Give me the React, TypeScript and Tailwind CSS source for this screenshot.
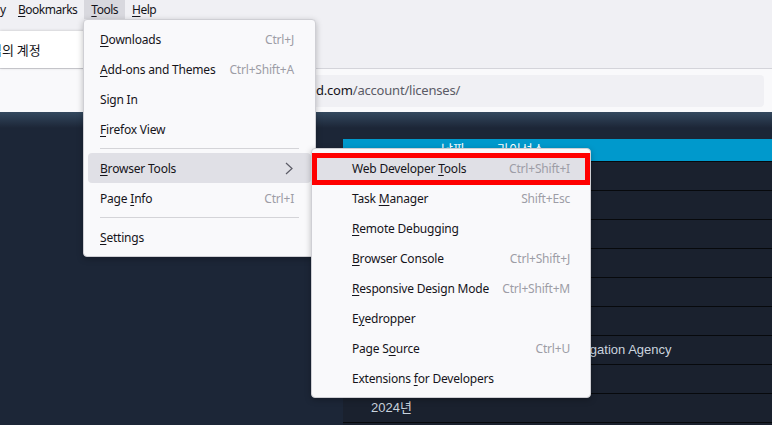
import { FC } from "react";

type Item =
  | { sep: true }
  | {
      sep?: false;
      label: string;
      k: number;
      sc?: string;
      sub?: boolean;
      active?: boolean;
    };

const toolsMenu: Item[] = [
  { label: "Downloads", k: 0, sc: "Ctrl+J" },
  { label: "Add-ons and Themes", k: 0, sc: "Ctrl+Shift+A" },
  { label: "Sign In", k: -1 },
  { label: "Firefox View", k: 0 },
  { sep: true },
  { label: "Browser Tools", k: 0, sub: true, active: true },
  { label: "Page Info", k: 5, sc: "Ctrl+I" },
  { sep: true },
  { label: "Settings", k: 0 },
];

const browserTools: Item[] = [
  { label: "Web Developer Tools", k: 14, sc: "Ctrl+Shift+I", active: true },
  { label: "Task Manager", k: 5, sc: "Shift+Esc" },
  { label: "Remote Debugging", k: 0 },
  { label: "Browser Console", k: 0, sc: "Ctrl+Shift+J" },
  { label: "Responsive Design Mode", k: 0, sc: "Ctrl+Shift+M" },
  { label: "Eyedropper", k: 1 },
  { label: "Page Source", k: 6, sc: "Ctrl+U" },
  { label: "Extensions for Developers", k: 11 },
];

// 밑줄 단축키 표시
const Label: FC<{ text: string; k: number }> = ({ text, k }) => {
  if (k < 0) return <span>{text}</span>;
  return (
    <span>
      {text.slice(0, k)}
      <span className="underline underline-offset-[2px] decoration-1">{text[k]}</span>
      {text.slice(k + 1)}
    </span>
  );
};

const MenuPanel: FC<{ items: Item[]; textPad: string; scPad: string }> = ({ items, textPad, scPad }) => (
  <div className="flex flex-col py-[4px] bg-[#f9f9fb] border border-[#cfcfd4] rounded-[4px] shadow-[0_2px_6px_rgba(0,0,0,0.25)] whitespace-nowrap tracking-[-0.2px]">
    {items.map((it, i) =>
      it.sep ? (
        <div key={i} className="mx-[16px] my-[4px] h-px bg-[#d4d4d8]" />
      ) : (
        <div
          key={i}
          className={`mx-[4px] h-[30px] pt-[1px] flex items-center rounded-[4px] ${textPad} ${scPad} ${
            it.active ? "bg-[#e0e0e6]" : ""
          }`}
        >
          <span className="flex-1 text-[#15141a]">
            <Label text={it.label} k={it.k} />
          </span>
          {it.sc && <span className="text-[#9d9da6] ml-[10px]">{it.sc}</span>}
          {it.sub && (
            <svg width="8" height="13" viewBox="0 0 8 13" className="mr-[1px]">
              <path d="M1 1 L7 6.5 L1 12" fill="none" stroke="#5b5b66" strokeWidth="1.2" />
            </svg>
          )}
        </div>
      )
    )}
  </div>
);

const rows = ["2016년", "2017년", "2018년", "2019년", "2020년", "2021년", "2022년", "2023년", "2024년", ""];

export default function App() {
  return (
    <div className="relative w-[772px] h-[425px] overflow-hidden font-['Noto_Sans','Noto_Sans_CJK_KR',sans-serif] text-[12px]">
      {/* 탭 영역 + 메뉴바 */}
      <div className="h-[68px] bg-[#f0f0f4] flex flex-col">
        <div className="h-[19px] flex items-stretch text-[#15141a] tracking-[-0.5px] whitespace-nowrap">
          <span className="w-[11px] flex items-center">y</span>
          <span className="px-[7px] flex items-center">
            <Label text="Bookmarks" k={0} />
          </span>
          <span className="px-[7px] flex items-center bg-[#d8d8de]">
            <Label text="Tools" k={0} />
          </span>
          <span className="px-[7px] flex items-center">
            <Label text="Help" k={0} />
          </span>
        </div>
        <div className="flex-1 flex items-end">
          <div className="w-[230px] h-[37px] bg-white shadow-[0_0_3px_rgba(0,0,0,0.2)] flex items-center overflow-hidden">
            <span className="ml-[-10px] text-[13px] text-[#15141a] whitespace-nowrap font-['Noto_Sans_CJK_KR',sans-serif]">
              님의 계정
            </span>
          </div>
        </div>
      </div>

      {/* 주소 표시줄 */}
      <div className="h-[44px] bg-[#f9f9fb] border-t border-[#d4d4da] flex items-center pl-[200px] pr-[8px]">
        <div className="flex-1 h-[32px] bg-[#f0f0f4] rounded-[4px] flex items-center pl-[116px] text-[13px] tracking-[-0.2px]">
          <span className="text-[#15141a]">d.com</span>
          <span className="text-[#5b5b66]">/account/licenses/</span>
        </div>
      </div>

      {/* 페이지 */}
      <div className="h-[313px] bg-[#1c2637] flex flex-col font-['Liberation_Sans','Noto_Sans_CJK_KR',sans-serif] text-[13px]">
        <div className="h-[16px] shrink-0 bg-gradient-to-b from-[#34495f] to-[#1c2637]" />
        <div className="ml-[343px] mt-[11px] flex flex-col whitespace-nowrap">
          <div className="h-[22px] bg-[#0099cc] flex items-center text-white">
            <span className="ml-[98px]">날짜</span>
            <span className="ml-[32px]">라이선스</span>
          </div>
          {rows.map((r, i) => (
            <div key={i} className="h-[29px] shrink-0 bg-[#1a212e] border-t border-[#07090c] flex items-center text-[#c9d3de]">
              <span className="ml-[28px] w-[143px]">{r}</span>
              {i === 6 && <span>Korea Investigation Agency</span>}
            </div>
          ))}
        </div>
      </div>

      {/* Tools 메뉴 */}
      <div className="absolute left-[83px] top-[19px] w-[233px]">
        <MenuPanel items={toolsMenu} textPad="pl-[12px]" scPad="pr-[17px]" />
      </div>

      {/* Browser Tools 하위 메뉴 */}
      <div className="absolute left-[311px] top-[148px] w-[280px]">
        <MenuPanel items={browserTools} textPad="pl-[36px]" scPad="pr-[16px]" />
      </div>

      {/* 강조 표시 박스 */}
      <div className="absolute left-[312px] top-[153px] w-[278px] h-[32px] border-[5px] border-[#ff0000]" />
    </div>
  );
}
